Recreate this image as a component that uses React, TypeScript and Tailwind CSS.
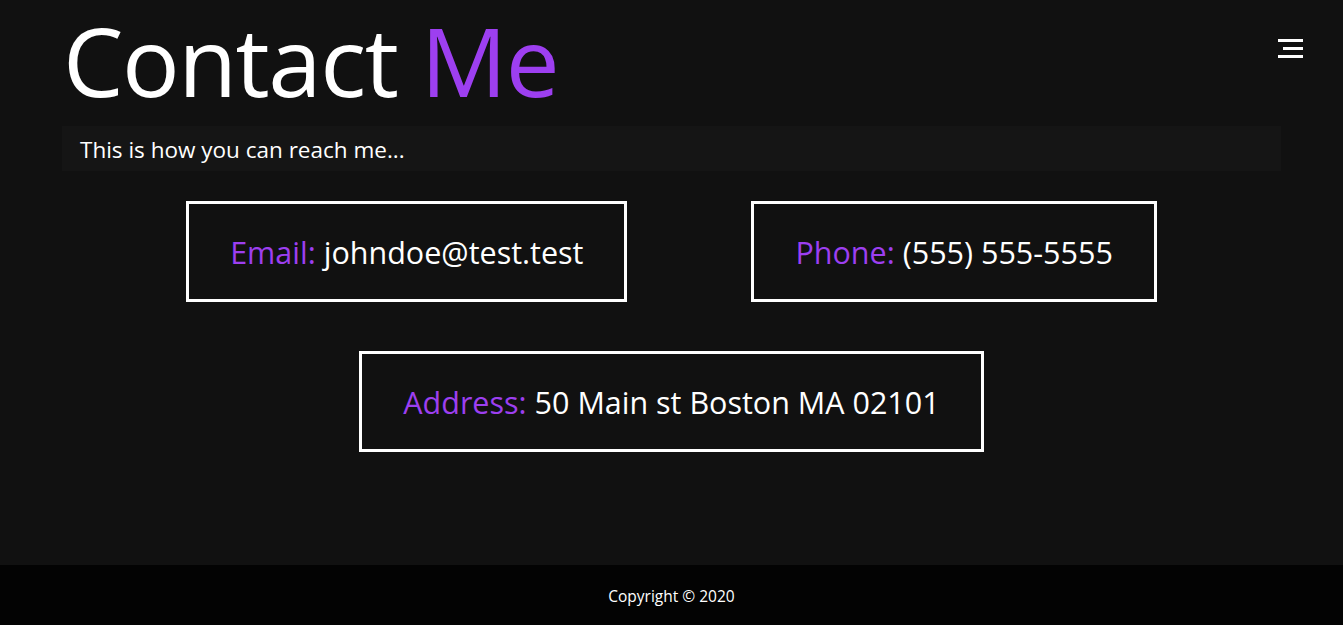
const contacts = [
  [{ label: 'Email:', value: 'johndoe@test.test' }, { label: 'Phone:', value: '(555) 555-5555' }],
  [{ label: 'Address:', value: '50 Main st Boston MA 02101' }],
];

const App = () => {
  return (
    <div className="min-h-screen flex flex-col bg-[#111111] text-white font-['Open_Sans',sans-serif]">
      <main className="flex-1 px-[62px]">
        <div className="flex items-start justify-between">
          <h1 className="text-[96px] leading-[1.25] font-normal tracking-[-1.5px] ml-[1px]">
            Contact <span className="text-[#9d3ff0]">Me</span>
          </h1>
          <button className="mt-[39px] -mr-[22px] flex flex-col items-end gap-[5px] w-[25px]">
            <span className="block h-[3px] w-[25px] bg-white" />
            <span className="block h-[3px] w-[20px] bg-white" />
            <span className="block h-[3px] w-[25px] bg-white" />
          </button>
        </div>

        {/* Subtitle */}
        <div className="mt-[6px] w-[1219px] h-[45px] bg-[#151515] flex items-center px-[18px] pt-[2px]">
          <p className="text-[22.5px]">This is how you can reach me...</p>
        </div>

        {/* Contact cards */}
        <div className="mt-[30px] flex flex-col items-center gap-[49px] -ml-[62px] w-[1343px]">
          {contacts.map((row, i) => (
            <div key={i} className="flex justify-center gap-[124px]">
              {row.map((c) => (
                <div
                  key={c.label}
                  className="border-[3px] border-white h-[101px] px-[41px] pt-[3px] flex items-center text-[30.5px]"
                >
                  <span className="text-[#9d3ff0]">{c.label}</span>
                  <span className="ml-[8px]">{c.value}</span>
                </div>
              ))}
            </div>
          ))}
        </div>
      </main>

      <footer className="h-[60px] bg-[#030303] flex items-center justify-center pt-[3px]">
        <p className="text-[15.5px]">Copyright © 2020</p>
      </footer>
    </div>
  );
};

export default App;
